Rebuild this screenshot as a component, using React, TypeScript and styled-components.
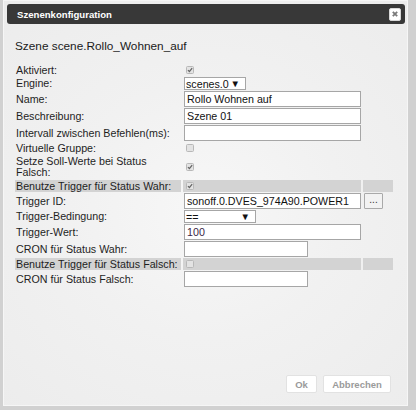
import styled, { createGlobalStyle } from 'styled-components';

const GlobalStyle = createGlobalStyle`
    html, body {
        margin: 0;
        padding: 0;
        background: #d1d1d1;
        font-family: "Liberation Sans", Arial, sans-serif;
    }
    * {
        box-sizing: border-box;
    }
`;

const Page = styled.div`
    width: 416px;
    height: 410px;
    padding: 0 8px 4px 3px;
    background: #d1d1d1;
`;

const Dialog = styled.div`
    width: 405px;
    height: 406px;
    border: 1px solid #f6f6f6;
    padding: 3px 2px 0 3px;
    display: flex;
    flex-direction: column;
    background: radial-gradient(ellipse 75% 70% at 50% 52%, #f7f7f7 0%, #f1f1f1 45%, #ececec 100%);
`;

const TitleBar = styled.div`
    height: 20px;
    background: #383838;
    border-radius: 3px;
    display: flex;
    align-items: center;
    justify-content: space-between;
    padding: 0 4px 0 10px;
`;

const Title = styled.span`
    color: #fff;
    font-weight: 700;
    font-size: 9.6px;
`;

const CloseButton = styled.button`
    width: 12px;
    height: 13px;
    padding: 0;
    border: 1px solid #d8d8d8;
    border-radius: 2px;
    background: #fff;
    display: flex;
    align-items: center;
    justify-content: center;
    cursor: pointer;
`;

const Content = styled.div`
    padding-left: 8px;
`;

const Heading = styled.h3`
    margin: 15px 0 11px 0;
    font-size: 11.8px;
    line-height: 14px;
    font-weight: 400;
    color: #1a1a1a;
`;

const Form = styled.div`
    display: grid;
    grid-template-columns: 166px 178px 30px;
    column-gap: 2px;
    row-gap: 1px;
`;

const Cell = styled.div<{ $band?: boolean; $h: number }>`
    height: ${p => p.$h}px;
    display: flex;
    align-items: center;
    background: ${p => (p.$band ? '#d3d3d3' : 'transparent')};
`;

const Label = styled(Cell)`
    padding-left: 1px;
    font-size: 10.7px;
    line-height: 11px;
    color: #1e1e1e;
    white-space: nowrap;
`;

const TextInput = styled.div<{ $w?: number; $color?: string }>`
    width: ${p => p.$w ?? 177}px;
    height: 16px;
    margin-left: 1px;
    border: 1px solid #a6a6a6;
    background: #fff;
    padding: 0 2px;
    display: flex;
    align-items: center;
    font-size: 10.7px;
    color: ${p => p.$color ?? '#111'};
    white-space: nowrap;
    overflow: hidden;
`;

const Select = styled.div<{ $w: number }>`
    width: ${p => p.$w}px;
    height: 13px;
    margin-left: 1px;
    border: 1px solid #a6a6a6;
    background: #fff;
    padding: 0 5px 0 1px;
    display: flex;
    align-items: center;
    justify-content: space-between;
    font-size: 10.7px;
    color: #111;
`;

const Arrow = styled.span`
    font-size: 9.5px;
    line-height: 1;
    color: #111;
`;

const Check = styled.span`
    width: 8px;
    height: 8px;
    margin-left: 3px;
    border: 1px solid #b8b8b8;
    border-radius: 1.5px;
    background: #e3e3e3;
    display: flex;
    align-items: center;
    justify-content: center;
`;

const PickButton = styled.button`
    width: 19px;
    height: 16px;
    margin-left: 1px;
    padding: 0 0 3px 0;
    border: 1px solid #a9a9a9;
    border-radius: 1px;
    background: #f2f2f2;
    font-family: inherit;
    font-size: 10px;
    color: #333;
    line-height: 1;
`;

const Footer = styled.div`
    margin-top: auto;
    display: flex;
    justify-content: flex-end;
    gap: 6px;
    padding: 0 14px 12px 0;
`;

const Button = styled.button<{ $w: number }>`
    width: ${p => p.$w}px;
    height: 18px;
    padding: 0;
    border: 1px solid #e2e2e2;
    border-radius: 2px;
    background: #fff;
    font-family: inherit;
    font-size: 9.5px;
    font-weight: 700;
    color: #9a9a9a;
`;

const Checkbox = ({ checked }: { checked: boolean }) => (
    <Check>
        {checked && (
            <svg width="6" height="6" viewBox="0 0 5 5">
                <path d="M0.8 2.6 L2 3.8 L4.3 1" fill="none" stroke="#666" strokeWidth="1.1" />
            </svg>
        )}
    </Check>
);

const App = () => {
    return (
        <Page>
            <GlobalStyle />
            <Dialog>
                <TitleBar>
                    <Title>Szenenkonfiguration</Title>
                    <CloseButton>
                        <svg width="6" height="6" viewBox="0 0 6 6">
                            <path d="M0.8 0.8 L5.2 5.2 M5.2 0.8 L0.8 5.2" stroke="#7a7a7a" strokeWidth="1.8" />
                        </svg>
                    </CloseButton>
                </TitleBar>
                <Content>
                    <Heading>Szene scene.Rollo_Wohnen_auf</Heading>
                    <Form>
                        <Label $h={12}>Aktiviert:</Label>
                        <Cell $h={12}><Checkbox checked /></Cell>
                        <Cell $h={12} />

                        <Label $h={13}>Engine:</Label>
                        <Cell $h={13}><Select $w={62}>scenes.0<Arrow>▼</Arrow></Select></Cell>
                        <Cell $h={13} />

                        <Label $h={16}>Name:</Label>
                        <Cell $h={16}><TextInput>Rollo Wohnen auf</TextInput></Cell>
                        <Cell $h={16} />

                        <Label $h={16}>Beschreibung:</Label>
                        <Cell $h={16}><TextInput>Szene 01</TextInput></Cell>
                        <Cell $h={16} />

                        <Label $h={16}>Intervall zwischen Befehlen(ms):</Label>
                        <Cell $h={16}><TextInput /></Cell>
                        <Cell $h={16} />

                        <Label $h={12}>Virtuelle Gruppe:</Label>
                        <Cell $h={12}><Checkbox checked={false} /></Cell>
                        <Cell $h={12} />

                        <Label $h={24}>Setze Soll-Werte bei Status<br />Falsch:</Label>
                        <Cell $h={24}><Checkbox checked /></Cell>
                        <Cell $h={24} />

                        <Label $h={12} $band>Benutze Trigger für Status Wahr:</Label>
                        <Cell $h={12} $band><Checkbox checked /></Cell>
                        <Cell $h={12} $band />

                        <Label $h={16}>Trigger ID:</Label>
                        <Cell $h={16}><TextInput>sonoff.0.DVES_974A90.POWER1</TextInput></Cell>
                        <Cell $h={16}><PickButton>...</PickButton></Cell>

                        <Label $h={13}>Trigger-Bedingung:</Label>
                        <Cell $h={13}><Select $w={72}>==<Arrow>▼</Arrow></Select></Cell>
                        <Cell $h={13} />

                        <Label $h={16}>Trigger-Wert:</Label>
                        <Cell $h={16}><TextInput $color="#3a1d48">100</TextInput></Cell>
                        <Cell $h={16} />

                        <Label $h={16}>CRON für Status Wahr:</Label>
                        <Cell $h={16}><TextInput $w={124} /></Cell>
                        <Cell $h={16} />

                        <Label $h={12} $band>Benutze Trigger für Status Falsch:</Label>
                        <Cell $h={12} $band><Checkbox checked={false} /></Cell>
                        <Cell $h={12} $band />

                        <Label $h={16}>CRON für Status Falsch:</Label>
                        <Cell $h={16}><TextInput $w={124} /></Cell>
                        <Cell $h={16} />
                    </Form>
                </Content>
                <Footer>
                    <Button $w={31}>Ok</Button>
                    <Button $w={68}>Abbrechen</Button>
                </Footer>
            </Dialog>
        </Page>
    );
};

export default App;
